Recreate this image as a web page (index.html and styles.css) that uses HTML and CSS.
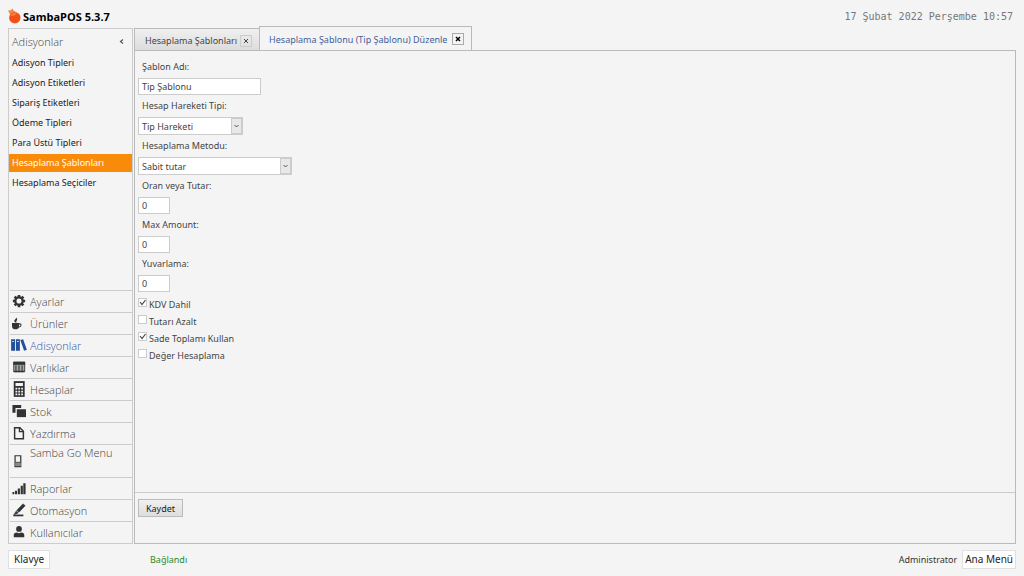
FILE: index.html
```html
<!DOCTYPE html>
<html lang="tr">

<head>
  <meta charset="UTF-8">
  <meta name="viewport" content="width=device-width">
  <title>SambaPOS 5.3.7</title>
  <link rel="stylesheet" href="styles.css">
</head>

<body>

  <header class="topbar">
    <svg class="logo" viewBox="0 0 13 16">
      <path d="M0 2.500 L2.500 2.200 L4.500 0.500 L5.500 2.500 L7.500 3.500 L5.500 6.500 L2 6.500 Z" fill="#f58a4c" />
      <circle cx="6.800" cy="9.800" r="5.700" fill="#f2501a" />
      <path d="M2.500 8 Q3.500 4.500 7.500 4.500 L9 6 L5 8 Z" fill="#fa7a40" />
    </svg>
    <h1>SambaPOS 5.3.7</h1>
    <time class="clock" datetime="2022-02-17T10:57">17 Şubat 2022 Perşembe 10:57</time>
  </header>

  <main class="workspace">

    <aside class="sidebar">
      <div class="sidebar-title">
        <h2>Adisyonlar</h2>
        <button type="button" class="collapse" aria-label="Daralt">
          <svg viewBox="0 0 5 7"><path d="M4 1.500 L1.500 3.500 L4 5.500" fill="none" stroke="#555" stroke-width="1.200" /></svg>
        </button>
      </div>

      <nav class="submenu">
        <a href="#">Adisyon Tipleri</a>
        <a href="#">Adisyon Etiketleri</a>
        <a href="#">Sipariş Etiketleri</a>
        <a href="#">Ödeme Tipleri</a>
        <a href="#">Para Üstü Tipleri</a>
        <a href="#" class="selected">Hesaplama Şablonları</a>
        <a href="#">Hesaplama Seçiciler</a>
      </nav>

      <nav class="modules">
        <a href="#">
          <svg viewBox="0 0 16 16">
            <circle cx="8" cy="8" r="4.200" fill="none" stroke="currentColor" stroke-width="2.600" />
            <path d="M8 1v3M8 12v3M1 8h3M12 8h3M3 3l2.200 2.200M10.800 10.800L13 13M13 3l-2.200 2.200M5.200 10.800L3 13" stroke="currentColor" stroke-width="3" />
          </svg>
          Ayarlar
        </a>
        <a href="#">
          <svg viewBox="0 0 16 16">
            <path d="M0 8h8v3.500q0 3.500-2.500 3.500H2.500Q0 15 0 11.500Z" fill="currentColor" />
            <path d="M8 9h1q1.300 0 1.300 1.500T7.500 13" fill="none" stroke="currentColor" stroke-width="1.200" />
            <path d="M4 7.500q-2.500-1.500-0.500-3.500T4.500 1.500q2.500 2 1 3.500T5.500 7.500Z" fill="currentColor" />
          </svg>
          Ürünler
        </a>
        <a href="#" class="current">
          <svg viewBox="0 0 16 16">
            <path d="M-1 1.500h4.500v13H-1ZM4.500 1.500h4.500v13H4.500ZM9.500 2.300l3.200-1L17 13.500l-3.200 1.200Z" fill="currentColor" />
            <path d="M0.300 4h1.900M5.800 4h1.900" stroke="#f4f4f4" />
          </svg>
          Adisyonlar
        </a>
        <a href="#">
          <svg viewBox="0 0 16 16">
            <path d="M2 2.500h12.500v11H2Z" fill="#aaa" stroke="currentColor" />
            <path d="M1.500 2H15v3.500H1.500Z" fill="currentColor" />
            <path d="M4.500 6v8M8 6v8M11.500 6v8M2 13h12" stroke="currentColor" stroke-width="1.200" />
          </svg>
          Varlıklar
        </a>
        <a href="#">
          <svg viewBox="0 0 16 16">
            <path d="M2-1h12.500v18H2Z" fill="currentColor" />
            <path d="M4 1h8.500v3.500H4ZM4 6.500h2v2H4ZM7.200 6.500h2v2h-2ZM10.500 6.500h2v2h-2ZM4 10h2v2H4ZM7.200 10h2v2h-2ZM10.500 10h2v2h-2ZM4 13.200h2v2H4ZM7.200 13.200h2v2h-2ZM10.500 13.200h2v2h-2Z" fill="#f4f4f4" />
          </svg>
          Hesaplar
        </a>
        <a href="#">
          <svg viewBox="0 0 16 16">
            <path d="M0.500 1h10v3.500H4v5.500H0.500Z" fill="currentColor" />
            <path d="M5.500 6H16v9H5.500Z" fill="currentColor" />
          </svg>
          Stok
        </a>
        <a href="#">
          <svg viewBox="0 0 16 16">
            <path d="M3 2h6l4 4v8.500H3Z" fill="none" stroke="currentColor" stroke-width="1.700" />
            <path d="M8.500 2v4.500H13" fill="none" stroke="currentColor" stroke-width="1.500" />
          </svg>
          Yazdırma
        </a>
        <a href="#" class="tall">
          <svg viewBox="0 0 16 16">
            <path d="M3.500 2h6.500v12.500H3.500Z" fill="#f4f4f4" stroke="currentColor" stroke-width="1.400" />
            <path d="M4 10h6v4H4Z" fill="#888" />
            <path d="M4 9.500h6" stroke="currentColor" />
          </svg>
          Samba Go Menu
        </a>
        <a href="#">
          <svg viewBox="0 0 16 16">
            <path d="M0.500 12.500h2V15h-2ZM3.300 11h2.500v4H3.300ZM6.600 8.500h2.500V15H6.600ZM9.900 5.500h2.500V15H9.900ZM12.900 2.500H15.500V15h-2.600Z" fill="currentColor" />
          </svg>
          Raporlar
        </a>
        <a href="#">
          <svg viewBox="0 0 16 16">
            <path d="M12.500 1l2.500 2L8 10.500 5.500 8.500ZM4.800 9.300l2.200 2L2.500 13Z" fill="currentColor" stroke="currentColor" stroke-width="0.800" />
            <path d="M1.500 14.200h11.500" stroke="currentColor" stroke-width="2" />
          </svg>
          Otomasyon
        </a>
        <a href="#">
          <svg viewBox="0 0 16 16">
            <circle cx="8" cy="4.500" r="3.300" fill="currentColor" />
            <path d="M2 14v-2.500q0-3 3.500-3L8 9.500l2.500-1q3.500 0 3.500 3V14Z" fill="currentColor" />
          </svg>
          Kullanıcılar
        </a>
      </nav>
    </aside>

    <section class="content">
      <div class="tabs">
        <div class="tab">
          <a href="#">Hesaplama Şablonları</a>
          <button type="button" class="close" aria-label="Kapat">
            <svg viewBox="0 0 6 6"><path d="M1 1l4 4M5 1L1 5" stroke="currentColor" stroke-width="1" /></svg>
          </button>
        </div>
        <div class="tab active">
          <a href="#">Hesaplama Şablonu (Tip Şablonu) Düzenle</a>
          <button type="button" class="close" aria-label="Kapat">
            <svg viewBox="0 0 6 6"><path d="M1 1l4 4M5 1L1 5" stroke="currentColor" stroke-width="1.500" /></svg>
          </button>
        </div>
      </div>

      <form class="panel">
        <div class="fields">
          <label for="ad">Şablon Adı:</label>
          <input id="ad" class="name" type="text" value="Tip Şablonu">

          <label for="tip">Hesap Hareketi Tipi:</label>
          <select id="tip" class="type">
            <option>Tip Hareketi</option>
          </select>

          <label for="metod">Hesaplama Metodu:</label>
          <select id="metod" class="method">
            <option>Sabit tutar</option>
          </select>

          <label for="oran">Oran veya Tutar:</label>
          <input id="oran" class="number" type="text" value="0">

          <label for="max">Max Amount:</label>
          <input id="max" class="number" type="text" value="0">

          <label for="yuvarlama">Yuvarlama:</label>
          <input id="yuvarlama" class="number" type="text" value="0">

          <div class="checks">
            <label><input type="checkbox" checked>KDV Dahil</label>
            <label><input type="checkbox">Tutarı Azalt</label>
            <label><input type="checkbox" checked>Sade Toplamı Kullan</label>
            <label><input type="checkbox">Değer Hesaplama</label>
          </div>
        </div>

        <div class="actions">
          <button type="button" class="save">Kaydet</button>
        </div>
      </form>
    </section>

  </main>

  <footer class="statusbar">
    <div class="keyboard">
      <button type="button">Klavye</button>
    </div>
    <span class="connection">Bağlandı</span>
    <span class="user">Administrator</span>
    <button type="button">Ana Menü</button>
  </footer>

</body>

</html>
```
FILE: styles.css
```css
* {
  box-sizing: border-box;
  margin: 0;
  padding: 0;
}

body {
  font-family: "Noto Sans", "Open Sans", sans-serif;
  font-size: 9px;
  color: #333;
  background-color: #f4f4f4;
  display: flex;
  flex-direction: column;
  min-height: 100vh;
  padding: 0 8px;
}

a {
  color: inherit;
  text-decoration: none;
}

button,
input,
select {
  font: inherit;
  color: inherit;
}

/* top bar */
.topbar {
  display: flex;
  align-items: center;
  gap: 2px;
  height: 28px;
  padding: 4px 3px 0 0;
}

.logo {
  width: 13px;
  height: 16px;
}

h1 {
  font-family: "Open Sans", sans-serif;
  font-size: 11px;
  font-weight: 700;
  color: #000;
}

.clock {
  margin-left: auto;
  font-family: "DejaVu Sans Mono", monospace;
  font-size: 10px;
  color: #777;
}

/* body of the window */
.workspace {
  flex: 1;
  display: flex;
  gap: 1px;
}

.sidebar {
  width: 125px;
  display: flex;
  flex-direction: column;
  border: 1px solid #ccc;
}

.sidebar-title {
  display: flex;
  align-items: center;
  justify-content: space-between;
  height: 25px;
  padding: 0 8px 0 3px;
}

h2 {
  font-family: "Open Sans", sans-serif;
  font-size: 11px;
  font-weight: 300;
  color: #444;
}

.collapse {
  display: flex;
  border: none;
  background: none;
}

.collapse svg {
  width: 5px;
  height: 7px;
}

.submenu a {
  display: block;
  height: 18px;
  margin-bottom: 2px;
  padding-left: 3px;
  line-height: 18px;
  color: #222;
}

.submenu .selected {
  color: #fff;
  background-color: #f98b0b;
}

.modules {
  margin-top: auto;
}

.modules a {
  display: flex;
  align-items: center;
  gap: 4px;
  height: 22px;
  margin-left: 1px;
  padding: 0 0 1px 2px;
  border-top: 1px solid #ccc;
  font-family: "Open Sans", sans-serif;
  font-size: 11px;
  font-weight: 300;
  color: #444;
}

.modules svg {
  width: 14px;
  height: 14px;
  color: #333;
  overflow: visible;
}

.modules .current {
  color: #3555a5;
}

.modules .current svg {
  color: #23509a;
}

.modules .tall {
  height: 33px;
  align-items: flex-start;
}

.modules .tall svg {
  align-self: flex-end;
  margin-bottom: 8px;
}

/* tabs */
.content {
  flex: 1;
  display: flex;
  flex-direction: column;
}

.tabs {
  display: flex;
  align-items: flex-end;
  height: 25px;
  margin-top: -2px;
  margin-bottom: -1px;
}

.tab {
  display: flex;
  align-items: center;
  gap: 3px;
  height: 23px;
  padding: 2px 7px 0 10px;
  border: 1px solid #bbb;
  border-right: none;
  color: #444;
  background: linear-gradient(#f0f0f0, #dcdcdc);
}

.tab.active {
  gap: 5px;
  height: 25px;
  padding: 0 7px 0 9px;
  border-right: 1px solid #bbb;
  border-bottom: none;
  color: #3f5f9c;
  background: #f4f4f4;
}

.close {
  display: flex;
  align-items: center;
  justify-content: center;
  width: 12px;
  height: 12px;
  border: 1px solid #ccc;
  background: none;
}

.close svg {
  width: 6px;
  height: 6px;
}

.active .close {
  border-color: #aaa;
  color: #000;
}

/* edit form */
.panel {
  flex: 1;
  display: flex;
  flex-direction: column;
  border: 1px solid #bbb;
}

.fields {
  flex: 1;
  display: flex;
  flex-direction: column;
  align-items: flex-start;
  padding: 5px 3px;
  color: #444;
}

.fields > label {
  height: 22px;
  padding-left: 4px;
  line-height: 22px;
}

.fields input[type="text"],
select {
  height: 17px;
  padding: 0 3px;
  border: 1px solid #ccc;
  background-color: #fff;
}

.fields select {
  height: 18px;
  padding: 0 3px;
  appearance: none;
  background-image: url("data:image/svg+xml,%3Csvg xmlns='http://www.w3.org/2000/svg' width='11' height='16'%3E%3Crect x='.5' y='.5' width='10' height='15' fill='%23e8e8e8' stroke='%23ccc'/%3E%3Cpath d='M3.500 7l2 2L7.500 7' fill='none' stroke='%23555'/%3E%3C/svg%3E");
  background-repeat: no-repeat;
  background-position: right center;
}

.name {
  width: 123px;
}

.type {
  width: 105px;
}

.method {
  width: 154px;
}

.number {
  width: 32px;
}

.checks {
  margin-top: 4px;
}

.checks label {
  display: flex;
  align-items: flex-start;
  gap: 2px;
  height: 17px;
  line-height: 17px;
}

.checks input {
  appearance: none;
  width: 9px;
  height: 9px;
  margin-top: 2px;
  border: 1px solid #ccc;
  background-color: #fff;
}

.checks input:checked {
  background-image: url("data:image/svg+xml,%3Csvg xmlns='http://www.w3.org/2000/svg' width='7' height='7'%3E%3Cpath d='M1 3l2 2.500L6.500 1' fill='none' stroke='%23444' stroke-width='1.200'/%3E%3C/svg%3E");
}

.actions {
  height: 51px;
  padding: 6px 3px;
  border-top: 1px solid #ccc;
}

.save {
  width: 45px;
  height: 18px;
  border: 1px solid #bbb;
  color: #222;
  background: linear-gradient(#f0f0f0, #dedede);
}

/* status bar */
.statusbar {
  display: flex;
  align-items: center;
  height: 32px;
  padding-bottom: 2px;
}

.statusbar button {
  height: 19px;
  padding: 0 2px;
  border: 1px solid #e0e0e0;
  font-size: 10px;
  color: #222;
  background-color: #fff;
}

.keyboard {
  width: 142px;
}

.keyboard button {
  padding: 0 5px;
}

.connection {
  color: #2a8a2a;
}

.user {
  margin-left: auto;
  margin-right: 5px;
}
```
